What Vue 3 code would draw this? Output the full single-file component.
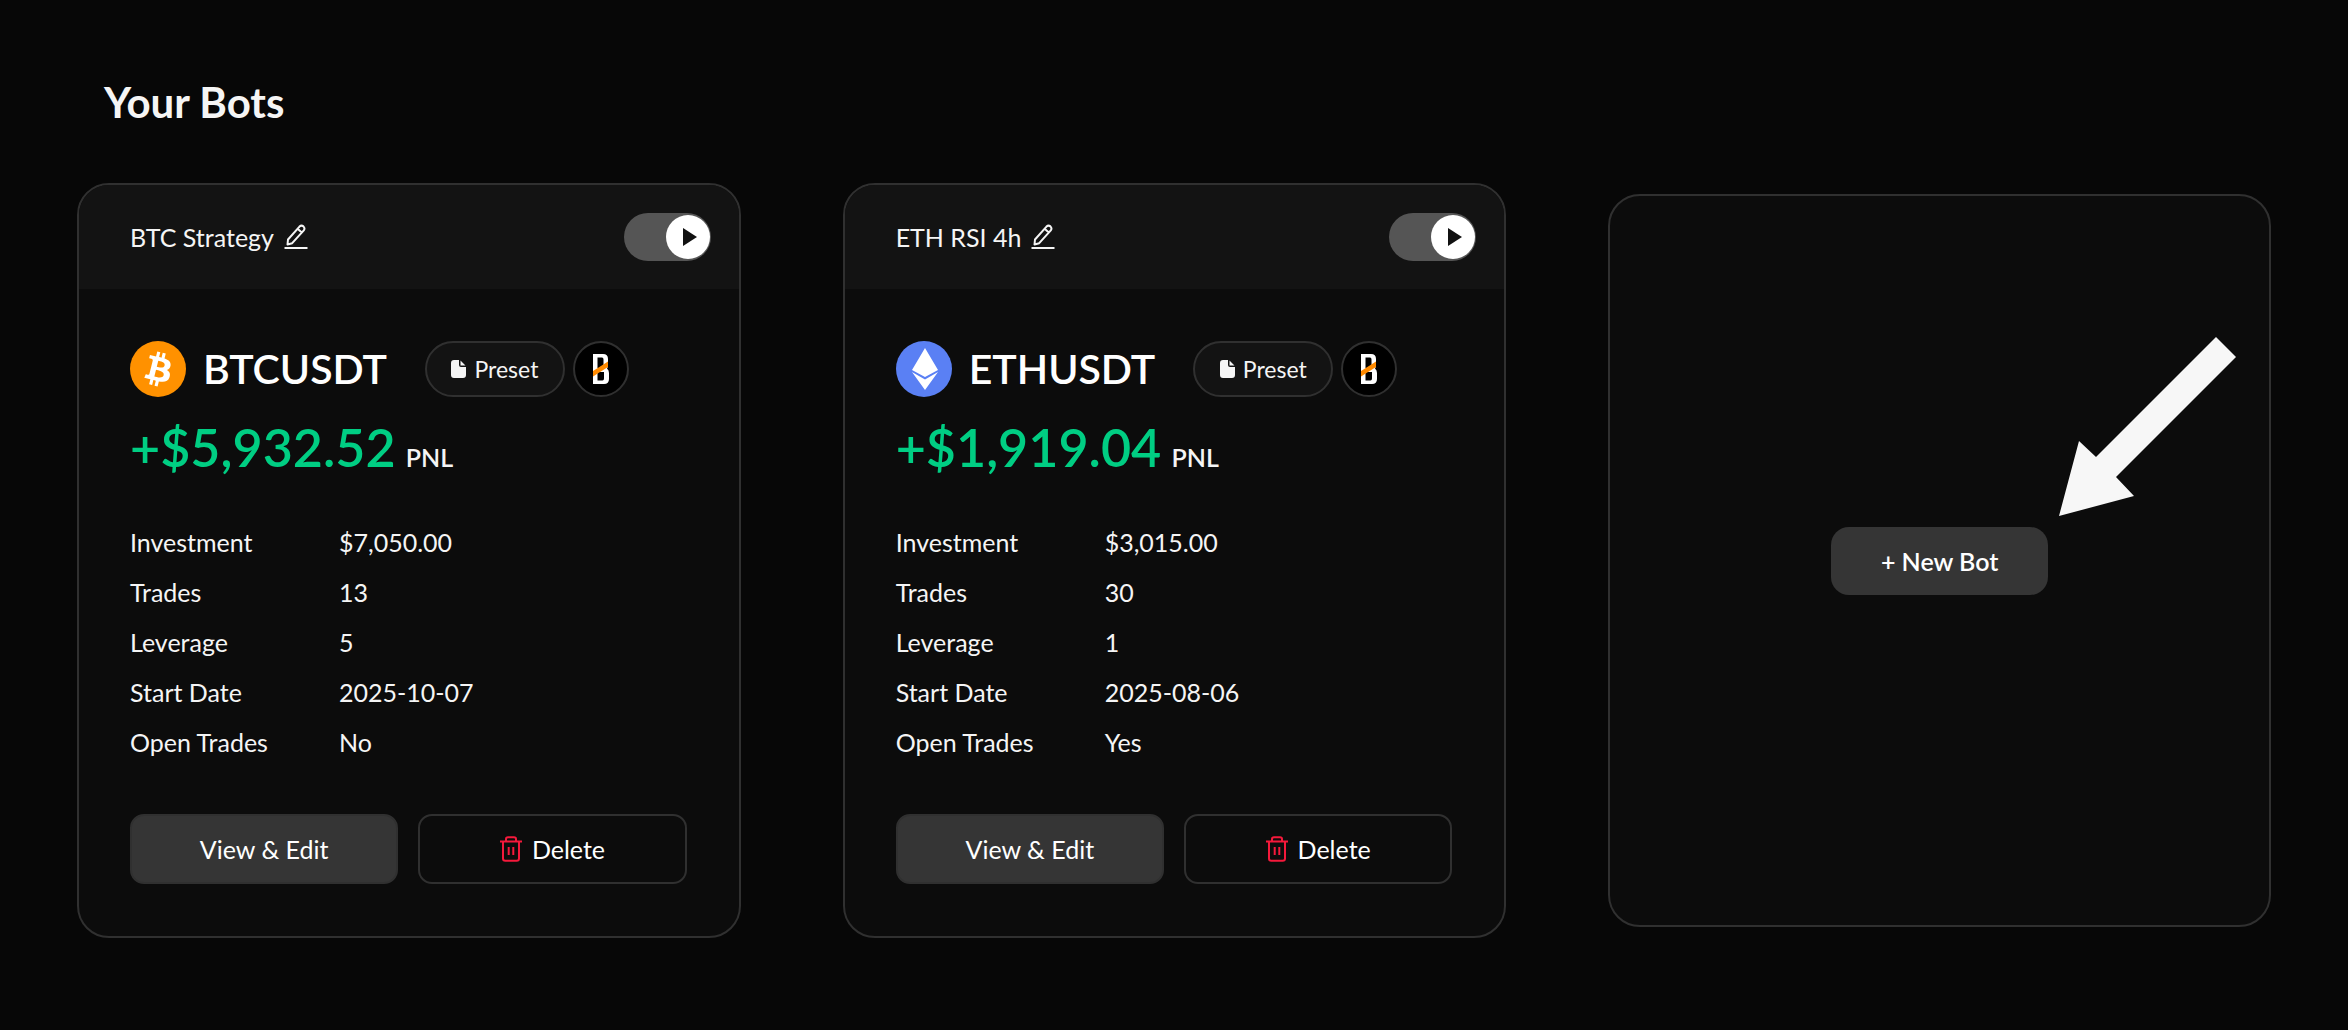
<template>
  <main class="page">
    <h1 class="page-title">Your Bots</h1>

    <div class="bots">
      <article v-for="bot in bots" :key="bot.id" class="card">
        <header class="card-header">
          <span class="bot-name">{{ bot.name }}</span>
          <button class="rename" type="button" :aria-label="`Rename ${bot.name}`">
            <svg viewBox="0 0 24 26" width="24" height="26" fill="none" stroke="currentColor" stroke-width="2" stroke-linejoin="round">
              <path d="M3.5 20.5 L4 15.5 L15.5 2.6 Q17.4 0.8 19.4 2.4 Q21.3 4.3 19.8 6.3 L8.2 19.2 Z M13.6 4.8 L17.8 8.5" />
              <path d="M0.5 24 H23.5" />
            </svg>
          </button>
          <label class="toggle">
            <input v-model="bot.running" type="checkbox" :aria-label="`Run ${bot.name}`" />
            <span class="knob">
              <svg viewBox="0 0 14 18" width="14" height="18"><path d="M0 0 L14 9 L0 18 Z" fill="#111" /></svg>
            </span>
          </label>
        </header>

        <div class="card-body">
          <div class="pair">
            <svg v-if="bot.coin === 'btc'" class="coin" viewBox="0 0 32 32" aria-hidden="true">
              <circle cx="16" cy="16" r="16" fill="#ff9100" />
              <path
                fill="#fff"
                d="M23.189 14.02c.314-2.096-1.283-3.223-3.465-3.975l.708-2.84-1.728-.43-.69 2.765c-.454-.114-.92-.22-1.385-.326l.695-2.783L15.596 6l-.708 2.839c-.376-.086-.746-.17-1.104-.26l.002-.009-2.384-.595-.46 1.846s1.283.294 1.256.312c.7.175.826.638.805 1.006l-.806 3.235c.048.012.11.03.18.057l-.183-.045-1.13 4.532c-.086.212-.303.531-.793.41.018.025-1.256-.313-1.256-.313l-.858 1.978 2.25.561c.418.105.828.215 1.231.318l-.715 2.872 1.727.43.708-2.84c.472.127.93.245 1.378.357l-.706 2.828 1.728.43.715-2.866c2.948.558 5.164.333 6.097-2.333.752-2.146-.037-3.385-1.588-4.192 1.13-.26 1.98-1.003 2.207-2.538zm-3.95 5.538c-.533 2.147-4.148.986-5.32.695l.95-3.805c1.172.293 4.929.872 4.37 3.11zm.535-5.569c-.487 1.953-3.495.96-4.47.717l.86-3.45c.975.243 4.118.696 3.61 2.733z"
              />
            </svg>
            <svg v-else class="coin" viewBox="0 0 56 56" aria-hidden="true">
              <circle cx="28" cy="28" r="28" fill="#5a80f4" />
              <path fill="#fff" d="M29 7 L42 29 L29 36 L16 29 Z M16 31 L29 38.5 L42 31 L29 49 Z" />
            </svg>
            <h2 class="symbol">{{ bot.symbol }}</h2>
            <span class="preset">
              <svg viewBox="0 0 15 18" width="15" height="18" fill="currentColor">
                <path d="M3 0 H8 V5 Q8 7 10 7 H15 V15 Q15 18 12 18 H3 Q0 18 0 15 V3 Q0 0 3 0 Z M9.5 0.5 L14.5 5.5 H9.5 Z" />
              </svg>
              Preset
            </span>
            <span class="exchange">
              <svg viewBox="0 0 16 30" width="16" height="30">
                <path
                  fill="#fff"
                  fill-rule="evenodd"
                  d="M0 0 H10 Q15 0 15 5 V11 Q15 13.5 14 14.5 Q16 16 16 19 V25 Q16 30 11 30 H0 Z M4.5 3.5 V14 H10.5 V5.5 Q10.5 3.5 9 3.5 Z M4.5 18 V26.5 H9.5 Q11 26.5 11 24.5 V18 Z"
                />
                <path d="M0 17 L15 7.5 V13 L0 22.5 Z" fill="#ff8a00" />
              </svg>
            </span>
          </div>

          <p class="pnl"><strong>{{ bot.pnl }}</strong> <span>PNL</span></p>

          <dl class="stats">
            <div v-for="[label, value] in bot.stats" :key="label">
              <dt>{{ label }}</dt>
              <dd>{{ value }}</dd>
            </div>
          </dl>

          <div class="actions">
            <button class="btn btn-solid" type="button">View &amp; Edit</button>
            <button class="btn btn-outline" type="button">
              <svg viewBox="0 0 22 26" width="22" height="26" fill="none" stroke="#f5193b" stroke-width="2">
                <path d="M0 5.5 H22 M6 5 V3 Q6 1.2 8 1.2 H14 Q16 1.2 16 3 V5" />
                <path d="M3 5.5 V22.5 Q3 24.8 5.3 24.8 H16.7 Q19 24.8 19 22.5 V5.5 M8.7 11 V19 M13.3 11 V19" />
              </svg>
              Delete
            </button>
          </div>
        </div>
      </article>

      <section class="card card-new">
        <button class="btn-new" type="button">+ New Bot</button>
        <svg class="arrow" viewBox="0 0 178 180" width="178" height="180" aria-hidden="true">
          <path d="M0 179 L20 104 L37 120 L157 0 L177 20 L57 140 L75 159 Z" fill="#f7f7f7" />
        </svg>
      </section>
    </div>
  </main>
</template>

<script setup>
import { ref } from 'vue'

const bots = ref([
  {
    id: 1,
    name: 'BTC Strategy',
    coin: 'btc',
    symbol: 'BTCUSDT',
    pnl: '+$5,932.52',
    running: true,
    stats: [
      ['Investment', '$7,050.00'],
      ['Trades', '13'],
      ['Leverage', '5'],
      ['Start Date', '2025-10-07'],
      ['Open Trades', 'No']
    ]
  },
  {
    id: 2,
    name: 'ETH RSI 4h',
    coin: 'eth',
    symbol: 'ETHUSDT',
    pnl: '+$1,919.04',
    running: true,
    stats: [
      ['Investment', '$3,015.00'],
      ['Trades', '30'],
      ['Leverage', '1'],
      ['Start Date', '2025-08-06'],
      ['Open Trades', 'Yes']
    ]
  }
])
</script>

<style>
body {
  margin: 0;
  background: #070707;
}
</style>

<style scoped>
.page {
  box-sizing: border-box;
  min-height: 100vh;
  padding: 72px 76px 72px 77px;
  color: #f5f5f5;
  font-family: 'Avenir Next', Avenir, Lato, 'Liberation Sans', sans-serif;
  font-size: 25px;
  line-height: 32px;
}

.page-title {
  margin: 0 0 51px;
  padding-left: 27px;
  font-size: 42px;
  font-weight: 700;
  line-height: 60px;
}

.bots {
  display: grid;
  grid-template-columns: repeat(3, 1fr);
  gap: 102px;
}

.card {
  box-sizing: border-box;
  border: 2px solid #303030;
  border-radius: 32px;
  background: #0c0c0c;
  overflow: hidden;
}

.card-header {
  display: flex;
  align-items: center;
  height: 104px;
  padding: 0 28px 0 51px;
  background: #131313;
}

.rename {
  display: flex;
  margin-left: 10px;
  padding: 0;
  border: 0;
  background: none;
  color: #f5f5f5;
  cursor: pointer;
}

.toggle {
  display: flex;
  box-sizing: border-box;
  width: 87px;
  height: 48px;
  margin-left: auto;
  padding: 2px 1px;
  border-radius: 24px;
  background: #555;
  cursor: pointer;
}

.toggle input {
  position: absolute;
  opacity: 0;
}

.toggle input:checked + .knob {
  margin-left: auto;
}

.knob {
  display: flex;
  align-items: center;
  justify-content: center;
  width: 44px;
  height: 44px;
  border-radius: 50%;
  background: #fff;
}

.knob svg {
  margin-left: 4px;
}

.card-body {
  padding: 52px 52px 52px 51px;
}

.pair {
  display: flex;
  align-items: center;
  height: 56px;
}

.coin {
  width: 56px;
  height: 56px;
  margin-right: 17px;
}

.symbol {
  margin: 0 38px 0 0;
  color: #fff;
  font-size: 41px;
  font-weight: 600;
  line-height: 56px;
}

.preset,
.exchange {
  display: flex;
  align-items: center;
  justify-content: center;
  box-sizing: border-box;
  height: 56px;
  border: 2px solid #303030;
  border-radius: 28px;
  background: #131313;
}

.preset {
  gap: 8px;
  width: 140px;
  margin-right: 8px;
  font-size: 23px;
}

.exchange {
  width: 56px;
  background: #000;
}

.pnl {
  margin: 18px 0 0;
  line-height: 64px;
  font-weight: 600;
}

.pnl strong {
  margin-right: 4px;
  color: #00ce83;
  font-size: 52px;
  font-weight: 600;
}

.stats {
  margin: 28px 0 0;
}

.stats div {
  display: flex;
  line-height: 50px;
}

.stats dt {
  width: 209px;
}

.stats dd {
  margin: 0;
}

.actions {
  display: grid;
  grid-template-columns: 1fr 1fr;
  gap: 20px;
  margin-top: 47px;
}

.btn,
.btn-new {
  display: flex;
  align-items: center;
  justify-content: center;
  box-sizing: border-box;
  color: #fff;
  font-family: inherit;
  font-size: 25px;
  cursor: pointer;
}

.btn {
  gap: 10px;
  height: 70px;
  border: 2px solid #303030;
  border-radius: 14px;
}

.btn-solid,
.btn-new {
  background: #353535;
}

.btn-outline {
  background: #0c0c0c;
}

.card-new {
  position: relative;
  display: flex;
  align-items: center;
  justify-content: center;
  margin: 11px 1px 11px 0;
}

.btn-new {
  width: 217px;
  height: 68px;
  border: 0;
  border-radius: 18px;
  font-weight: 600;
}

/* points at the corner of the new bot button */
.arrow {
  position: absolute;
  bottom: calc(50% + 44px);
  left: calc(50% + 119px);
}
</style>
